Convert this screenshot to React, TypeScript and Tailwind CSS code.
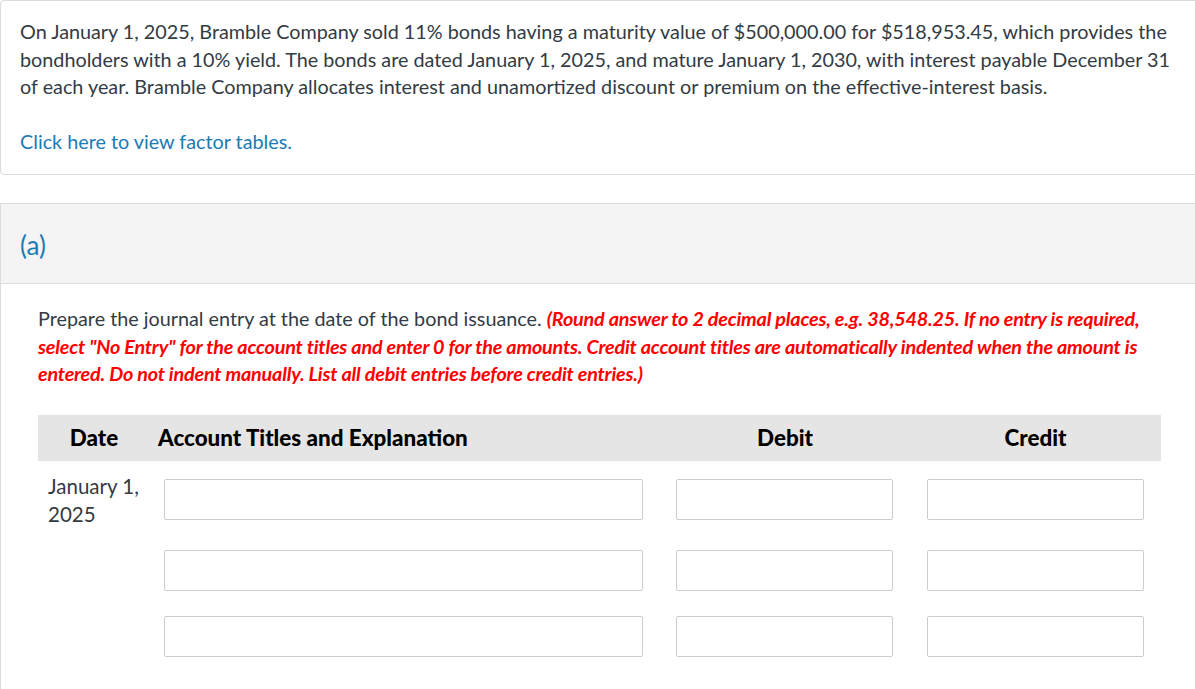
import React from 'react';

const Field = ({ className = '' }: { className?: string }) => (
  <input
    type="text"
    className={`block h-[41px] w-full rounded-[2px] border border-[#cccccc] bg-white ${className}`}
  />
);

const rows = [0, 1, 2];

const App = () => {
  return (
    <div className="min-h-[689px] overflow-hidden bg-white font-['Lato','Open_Sans',sans-serif] text-[19.8px] text-[#333b45]">
      {/* Problem statement */}
      <div className="-mr-4 rounded-[4px] border border-[#dcdcdc] bg-white pl-[19px] pr-[30px] pt-[17px] pb-[19px]">
        <p className="leading-[27.5px]">
          On January 1, 2025, Bramble Company sold 11% bonds having a maturity value of $500,000.00 for $518,953.45, which provides the
          bondholders with a 10% yield. The bonds are dated January 1, 2025, and mature January 1, 2030, with interest payable December 31
          of each year. Bramble Company allocates interest and unamortized discount or premium on the effective-interest basis.
        </p>
        <a href="#" className="mt-[27px] block leading-[27.5px] text-[#1b7bb5]">
          Click here to view factor tables.
        </a>
      </div>

      {/* Part (a) */}
      <div className="-mr-4 mt-[28px] border border-[#dcdcdc] pb-[60px]">
        <div className="h-[80px] border-b border-[#dcdcdc] bg-[#f4f4f4] px-[19px] pt-[25px]">
          <h2 className="text-[26px] leading-[32px] text-[#1b7bb5]">(a)</h2>
        </div>

        <div className="pr-4 pl-[37px] pt-[21px]">
          <p className="w-[1110px] leading-[27.5px]">
            Prepare the journal entry at the date of the bond issuance.{' '}
            <span className="font-bold italic tracking-[-0.2px] text-[#ff0000]">
              (Round answer to 2 decimal places, e.g. 38,548.25. If no entry is required, select "No Entry" for the account titles
              and enter 0 for the amounts. Credit account titles are automatically indented when the amount is entered. Do not
              indent manually. List all debit entries before credit entries.)
            </span>
          </p>

          <div className="mt-[27px] w-[1123px]">
            <div className="grid h-[46px] grid-cols-[112px_510px_250px_251px] items-center bg-[#e5e5e5] text-[22.4px] font-black text-black">
              <div className="text-center">Date</div>
              <div className="pl-[8px]">Account Titles and Explanation</div>
              <div className="text-center">Debit</div>
              <div className="text-center">Credit</div>
            </div>

            {rows.map((r) => (
              <div
                key={r}
                className={`grid h-[41px] grid-cols-[112px_510px_250px_251px] ${r === 0 ? 'mt-[18px]' : r === 1 ? 'mt-[30px]' : 'mt-[25px]'}`}
              >
                <div className="pl-[10px] text-[20.5px] leading-[28px]">
                  {r === 0 && (
                    <div className="-mt-[7px]">
                      January 1,
                      <br />
                      2025
                    </div>
                  )}
                </div>
                <div className="pl-[14px] pr-[17px]">
                  <Field />
                </div>
                <div className="pl-[16px] pr-[17px]">
                  <Field />
                </div>
                <div className="pl-[17px] pr-[17px]">
                  <Field />
                </div>
              </div>
            ))}
          </div>
        </div>
      </div>
    </div>
  );
};

export default App;
